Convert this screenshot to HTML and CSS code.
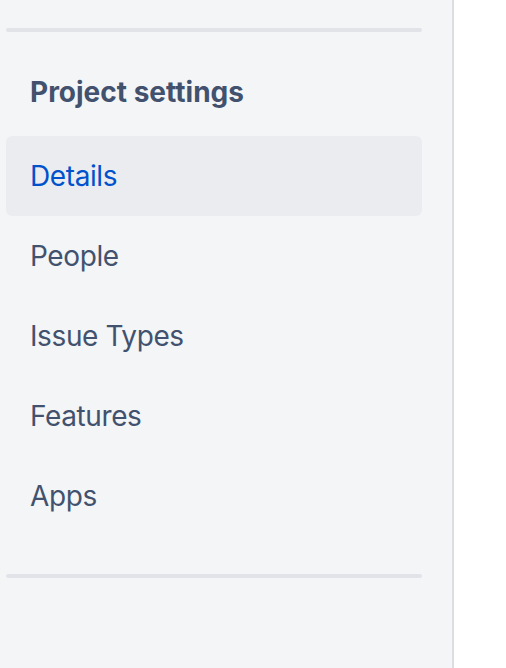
FILE: index.html
```html
<!DOCTYPE html>
<html>
<head>
<meta charset="utf-8">
<link rel="stylesheet" href="styles.css">
</head>
<body>
<div class="page">
  <nav class="sidebar">
    <div class="divider"></div>
    <div class="heading">Project settings</div>
    <ul class="menu">
      <li class="item active">Details</li>
      <li class="item">People</li>
      <li class="item">Issue Types</li>
      <li class="item">Features</li>
      <li class="item">Apps</li>
    </ul>
    <div class="divider bottom"></div>
  </nav>
  <main class="content"></main>
</div>
</body>
</html>
```
FILE: styles.css
```css
html, body {
  margin: 0;
  padding: 0;
  height: 100%;
}
body {
  font-family: Inter, "Noto Sans", "Liberation Sans", sans-serif;
  background: #ffffff;
}
.page {
  display: flex;
  height: 100%;
}
.sidebar {
  width: 416px;
  padding: 28px 30px 0 6px;
  background: #f4f5f7;
  border-right: 2px solid #dcdee3;
  display: flex;
  flex-direction: column;
}
.content {
  flex: 1;
  background: #ffffff;
}
.divider {
  height: 4px;
  border-radius: 2px;
  background: #e1e3e8;
}
.divider.bottom {
  margin-top: 38px;
}
.heading {
  font-size: 28px;
  font-weight: 700;
  color: #42526e;
  padding: 0 24px;
  line-height: 40px;
  margin-top: 40px;
  margin-bottom: 24px;
}
.menu {
  list-style: none;
  margin: 0;
  padding: 0;
}
.item {
  height: 80px;
  display: flex;
  align-items: center;
  padding: 0 24px;
  font-size: 28px;
  letter-spacing: -0.4px;
  color: #42526e;
  border-radius: 6px;
}
.item.active {
  background: #ebecf0;
  color: #0052cc;
}
```
